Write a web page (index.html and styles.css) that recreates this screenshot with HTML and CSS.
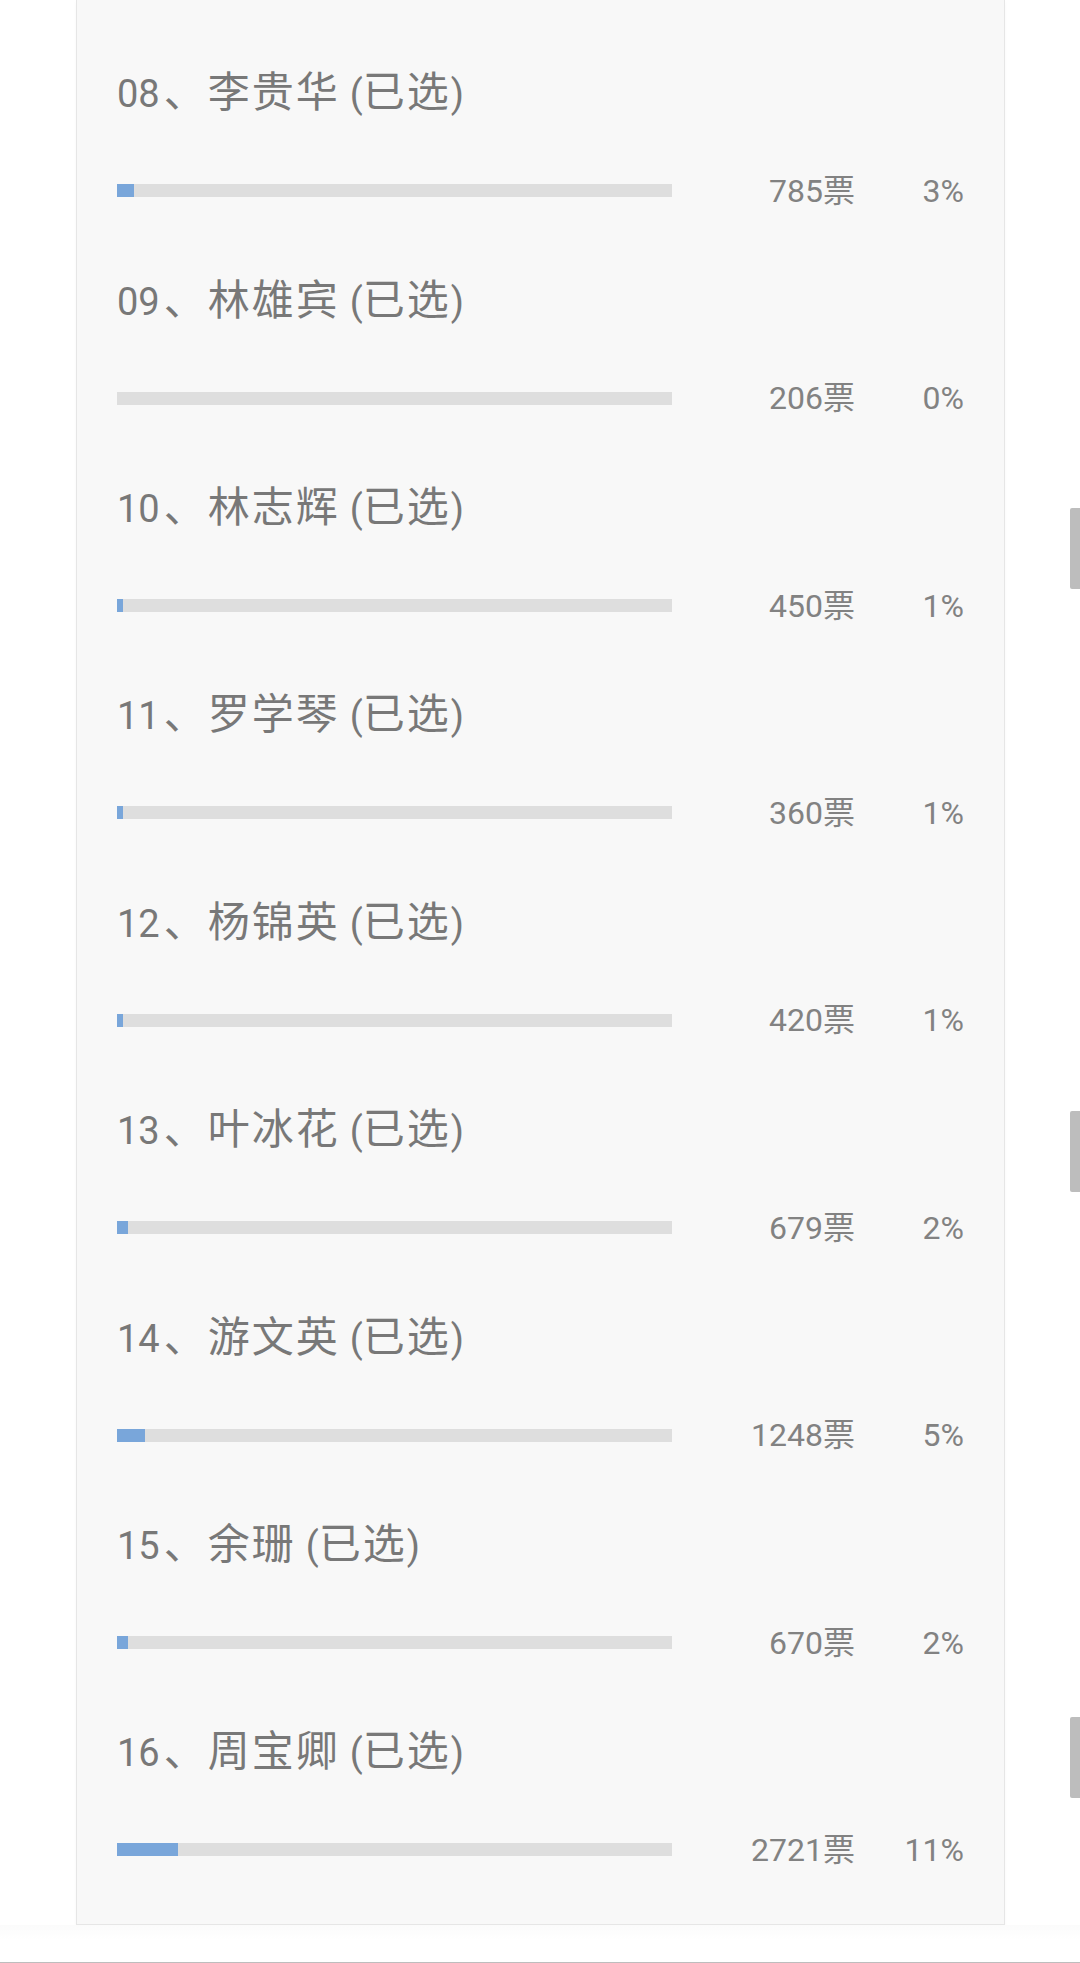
FILE: index.html
```html
<!DOCTYPE html>
<html lang="zh-CN">
<head>
<meta charset="utf-8">
<title>投票结果</title>
<link rel="stylesheet" href="styles.css">
</head>
<body>
<div class="page">
  <div class="card">
    <div class="item">
      <div class="title"><span class="idx">08</span><span class="cjk">、李贵华</span><span class="paren open">(</span><span class="cjk">已选</span><span class="paren">)</span></div>
      <div class="stat"><div class="track"><div class="fill" style="width:3%"></div></div><span class="votes">785票</span><span class="pct">3%</span></div>
    </div>
    <div class="item">
      <div class="title"><span class="idx">09</span><span class="cjk">、林雄宾</span><span class="paren open">(</span><span class="cjk">已选</span><span class="paren">)</span></div>
      <div class="stat"><div class="track"><div class="fill" style="width:0%"></div></div><span class="votes">206票</span><span class="pct">0%</span></div>
    </div>
    <div class="item">
      <div class="title"><span class="idx">10</span><span class="cjk">、林志辉</span><span class="paren open">(</span><span class="cjk">已选</span><span class="paren">)</span></div>
      <div class="stat"><div class="track"><div class="fill" style="width:1%"></div></div><span class="votes">450票</span><span class="pct">1%</span></div>
    </div>
    <div class="item">
      <div class="title"><span class="idx">11</span><span class="cjk">、罗学琴</span><span class="paren open">(</span><span class="cjk">已选</span><span class="paren">)</span></div>
      <div class="stat"><div class="track"><div class="fill" style="width:1%"></div></div><span class="votes">360票</span><span class="pct">1%</span></div>
    </div>
    <div class="item">
      <div class="title"><span class="idx">12</span><span class="cjk">、杨锦英</span><span class="paren open">(</span><span class="cjk">已选</span><span class="paren">)</span></div>
      <div class="stat"><div class="track"><div class="fill" style="width:1%"></div></div><span class="votes">420票</span><span class="pct">1%</span></div>
    </div>
    <div class="item">
      <div class="title"><span class="idx">13</span><span class="cjk">、叶冰花</span><span class="paren open">(</span><span class="cjk">已选</span><span class="paren">)</span></div>
      <div class="stat"><div class="track"><div class="fill" style="width:2%"></div></div><span class="votes">679票</span><span class="pct">2%</span></div>
    </div>
    <div class="item">
      <div class="title"><span class="idx">14</span><span class="cjk">、游文英</span><span class="paren open">(</span><span class="cjk">已选</span><span class="paren">)</span></div>
      <div class="stat"><div class="track"><div class="fill" style="width:5%"></div></div><span class="votes">1248票</span><span class="pct">5%</span></div>
    </div>
    <div class="item">
      <div class="title"><span class="idx">15</span><span class="cjk">、余珊</span><span class="paren open">(</span><span class="cjk">已选</span><span class="paren">)</span></div>
      <div class="stat"><div class="track"><div class="fill" style="width:2%"></div></div><span class="votes">670票</span><span class="pct">2%</span></div>
    </div>
    <div class="item">
      <div class="title"><span class="idx">16</span><span class="cjk">、周宝卿</span><span class="paren open">(</span><span class="cjk">已选</span><span class="paren">)</span></div>
      <div class="stat"><div class="track"><div class="fill" style="width:11%"></div></div><span class="votes">2721票</span><span class="pct">11%</span></div>
    </div>
  </div>
  <div class="foot"></div>
  <div class="scrollmark m1"></div>
  <div class="scrollmark m2"></div>
  <div class="scrollmark m3"></div>
</div>
</body>
</html>
```

FILE: styles.css
```css
html, body {
  margin: 0;
  padding: 0;
  background: #ffffff;
}

body {
  font-family: Roboto, "Noto Sans CJK SC", sans-serif;
}

.page {
  position: relative;
  width: 1080px;
  height: 1963px;
  overflow: hidden;
  display: flex;
  flex-direction: column;
}

.card {
  box-sizing: border-box;
  width: 929px;
  margin-left: 76px;
  padding: 29.3px 40px 28px;
  background: #f8f8f8;
  border: 1px solid #e6e6e6;
  border-top: none;
  box-shadow: 0 2px 4px rgba(0, 0, 0, 0.03);
}

.item {
  box-sizing: border-box;
  height: 207.4px;
  padding-top: 35px;
}

.title {
  height: 50px;
  line-height: 50px;
  font-size: 38px;
  color: #787878;
  white-space: nowrap;
}

.idx {
  font-size: 38px;
  margin-right: 4px;
}

.cjk {
  font-family: "Noto Sans CJK SC", sans-serif;
  font-size: 42px;
  letter-spacing: 2px;
}

.paren {
  font-size: 38px;
}

.paren.open {
  margin-left: 10px;
}

.stat {
  margin-top: 56.5px;
  height: 40px;
  display: flex;
  align-items: center;
}

.track {
  flex: none;
  width: 555px;
  height: 13px;
  background: #dedede;
}

.fill {
  height: 100%;
  background: #79a6da;
}

.votes,
.pct {
  font-size: 32px;
  line-height: 40px;
  color: #828282;
  text-align: right;
  white-space: nowrap;
}

.votes {
  width: 183px;
}

.pct {
  width: 109px;
}

.foot {
  flex: 1;
  border-bottom: 1px solid #bdbdbd;
  background: linear-gradient(#fbfbfb, #ffffff 40%);
}

.scrollmark {
  position: absolute;
  right: 0;
  width: 10px;
  height: 81px;
  background: #bdbdbd;
  border-radius: 2px 0 0 2px;
}

.m1 { top: 508px; }
.m2 { top: 1111px; }
.m3 { top: 1717px; }
```
